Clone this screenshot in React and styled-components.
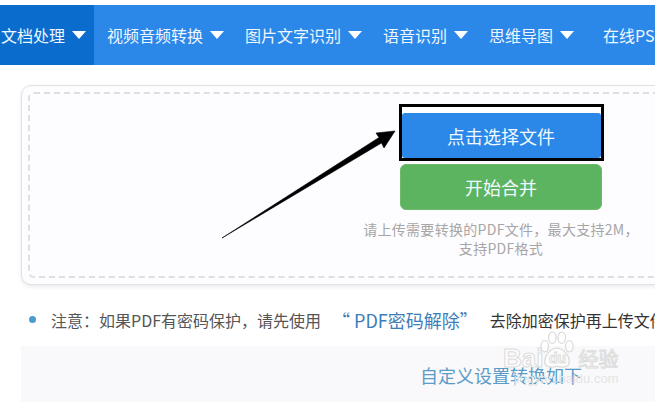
import React from 'react'
import styled, { createGlobalStyle } from 'styled-components'

const GlobalStyle = createGlobalStyle`
  html, body {
    margin: 0;
    padding: 0;
    background: #fff;
  }
  body {
    font-family: "Noto Sans CJK SC", "Liberation Sans", sans-serif;
  }
`

const Page = styled.div`
  position: relative;
  width: 655px;
  height: 402px;
  overflow: hidden;
  background: #fff;
  padding-top: 5px;
  box-sizing: border-box;
`

const Nav = styled.nav`
  display: flex;
  height: 60px;
  background: #2b88e9;
  white-space: nowrap;
`

const NavItem = styled.div`
  display: flex;
  align-items: center;
  flex: none;
  height: 100%;
  padding: 0 8px 0 ${props => props.$left || 13}px;
  color: #eef6ff;
  font-size: 16px;
  background: ${props => props.$active ? '#0a6dcd' : 'transparent'};
`

const Caret = styled.span`
  width: 0;
  height: 0;
  margin-left: 7px;
  border-left: 7.5px solid transparent;
  border-right: 7.5px solid transparent;
  border-top: 8px solid #fff;
`

const UploadCard = styled.section`
  width: 960px;
  height: 200px;
  box-sizing: border-box;
  margin: 20px 0 0 21px;
  padding: 6px;
  background: #fdfcfe;
  border: 1px solid #e2e0e4;
  border-radius: 10px;
  box-shadow: 0 2px 4px rgba(0, 0, 0, 0.08);
`

const DashedArea = styled.div`
  height: 100%;
  box-sizing: border-box;
  border: 2px dashed #dfdee2;
  border-radius: 6px;
  display: flex;
  flex-direction: column;
  align-items: center;
  padding-top: 10px;
`

const PickFrame = styled.div`
  width: 205px;
  height: 57px;
  box-sizing: border-box;
  border: 3px solid #000;
  padding-top: 6px;
  background: #fff;
`

const ActionButton = styled.div`
  display: flex;
  align-items: center;
  justify-content: center;
  color: #f1faff;
  font-size: 18px;
  height: ${props => props.$height}px;
  background: ${props => props.$color};
  border-radius: ${props => props.$radius}px;
  box-sizing: border-box;
`

const MergeButton = styled(ActionButton)`
  width: 202px;
  margin-top: 3px;
  border: 1px solid #6fbb6c;
`

const Hint = styled.p`
  margin: 10px 0 0;
  font-size: 14px;
  letter-spacing: 0.3px;
  line-height: 19px;
  color: #a6a6a6;
  text-align: center;
`

const Note = styled.div`
  display: flex;
  align-items: center;
  height: 53px;
  padding: 8px 0 0 29px;
  font-size: 16px;
  color: #555;
  white-space: nowrap;
`

const Bullet = styled.span`
  flex: none;
  width: 7px;
  height: 7px;
  margin-right: 15px;
  border-radius: 50%;
  background: #4a9ccf;
`

const NoteLink = styled.span`
  margin: 0 12px 0 11px;
  font-size: 18px;
  color: #3d7db9;
`

const NoteTail = styled.span`
  color: #333;
`

const SettingsPanel = styled.section`
  width: 960px;
  height: 60px;
  margin-left: 21px;
  padding-top: 16px;
  box-sizing: border-box;
  background: #f9f9fb;
  color: #5a9cc7;
  font-size: 18px;
  line-height: 27px;
  text-align: center;
`

const ArrowSvg = styled.svg`
  position: absolute;
  left: 0;
  top: 0;
  pointer-events: none;
`

const Watermark = styled.div`
  position: absolute;
  left: 503px;
  top: 330px;
  display: flex;
  flex-direction: column;
  align-items: flex-end;
  pointer-events: none;
`

const MarkRow = styled.div`
  display: flex;
  align-items: flex-end;
`

const MarkLatin = styled.span`
  font-family: "Liberation Sans", sans-serif;
  font-size: ${props => props.$size}px;
  font-weight: 700;
  line-height: 28px;
  color: rgba(255, 255, 255, 0.6);
  -webkit-text-stroke: 1px #dcdcdc;
`

const MarkCjk = styled.span`
  margin-left: 3px;
  font-size: 20px;
  line-height: 26px;
  color: rgba(255, 255, 255, 0.6);
  -webkit-text-stroke: 1px #dcdcdc;
`

const MarkUrl = styled.span`
  font-family: "Liberation Sans", sans-serif;
  font-size: 13px;
  line-height: 14px;
  color: #e4e4e6;
`

const Paw = styled.div`
  display: grid;
  align-items: end;
  justify-items: center;
  margin-left: -4px;

  > * {
    grid-area: 1 / 1;
  }
`

const navItems = [
  { label: '文档处理', left: 1, active: true },
  { label: '视频音频转换' },
  { label: '图片文字识别' },
  { label: '语音识别' },
  { label: '思维导图' },
  { label: '在线PS', left: 21, plain: true },
]

const App = () => {
  return (
    <Page>
      <GlobalStyle />
      <Nav>
        {navItems.map((item) => (
          <NavItem key={item.label} $active={item.active} $left={item.left}>
            {item.label}
            {!item.plain && <Caret />}
          </NavItem>
        ))}
      </Nav>
      <UploadCard>
        <DashedArea>
          <PickFrame>
            <ActionButton $color='#2b88e9' $height={45} $radius={3}>点击选择文件</ActionButton>
          </PickFrame>
          <MergeButton $color='#5cb360' $height={46} $radius={6}>开始合并</MergeButton>
          <Hint>
            请上传需要转换的PDF文件，最大支持2M，<br />
            支持PDF格式
          </Hint>
        </DashedArea>
      </UploadCard>
      <Note>
        <Bullet />
        注意：如果PDF有密码保护，请先使用
        <NoteLink>“ PDF密码解除”</NoteLink>
        <NoteTail>去除加密保护再上传文件</NoteTail>
      </Note>
      <SettingsPanel>自定义设置转换如下</SettingsPanel>
      <ArrowSvg width='655' height='402' viewBox='0 0 655 402'>
        <path d='M222 238 L379 137.5 L376 133 L395 131 L384 148 L381.5 143 Z' fill='#000' stroke='#000' strokeWidth='0.6' />
      </ArrowSvg>
      <Watermark>
        <MarkRow>
          <MarkLatin $size={26}>Bai</MarkLatin>
          <Paw>
            <svg width='36' height='42' viewBox='0 0 38 44' fill='rgba(255,255,255,0.55)' stroke='#dcdcdc' strokeWidth='1.4'>
              <ellipse cx='6' cy='17' rx='4' ry='6' />
              <ellipse cx='14' cy='8' rx='4' ry='6' />
              <ellipse cx='24' cy='8' rx='4' ry='6' />
              <ellipse cx='32' cy='17' rx='4' ry='6' />
              <path d='M19 19 C12 19 6 27 6 33 C6 39 12 40 19 38 C26 40 32 39 32 33 C32 27 26 19 19 19 Z' />
            </svg>
            <MarkLatin $size={14}>du</MarkLatin>
          </Paw>
          <MarkCjk>经验</MarkCjk>
        </MarkRow>
        <MarkUrl>jingyan.baidu.com</MarkUrl>
      </Watermark>
    </Page>
  )
}

export default App
